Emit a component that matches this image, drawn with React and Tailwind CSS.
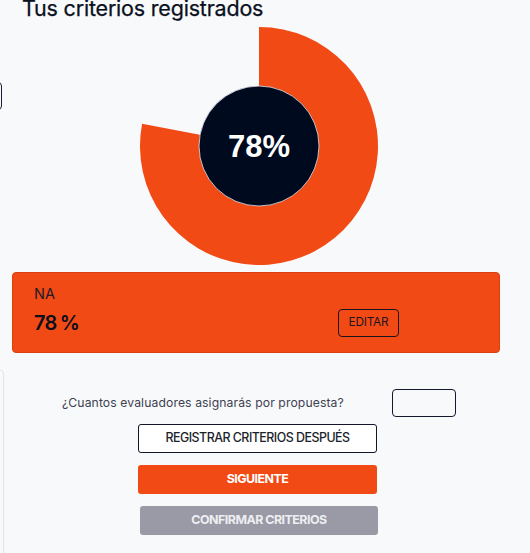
import React from "react";

function Donut() {
  return (
    <svg width="240" height="240" viewBox="0 0 240 240">
      <path d="M120 120 L120 1 A119 119 0 1 1 3.1 97.7 Z" fill="#f24a15" />
      <circle cx="120" cy="120" r="60" fill="#000a1f" stroke="#e8e9ee" strokeWidth="0.8" />
      <text
        x="120"
        y="131"
        textAnchor="middle"
        fill="#ffffff"
        fontFamily="'Liberation Sans', Arial, sans-serif"
        fontWeight="700"
        fontSize="31"
      >
        78%
      </text>
    </svg>
  );
}

export default function App() {
  return (
    <div className="relative w-[530px] h-[553px] overflow-hidden bg-[#f8f9fb] font-['Inter',sans-serif] text-[#0b1020]">
      <div className="absolute left-[-40px] top-[82px] w-[42px] h-[28px] rounded-[4px] border border-[#1a1f33]" />
      <div className="absolute left-[-40px] top-[369px] w-[44px] h-[200px] rounded-[5px] border border-[#e2e4ea]" />

      <h1 className="ml-[22px] mt-[-5px] text-[21.5px] leading-[26px] font-normal tracking-[-0.2px] [-webkit-text-stroke:0.25px_#0b1020]">
        Tus criterios registrados
      </h1>

      <div className="mt-[5px] flex pl-[139px]">
        <Donut />
      </div>

      <div className="mt-[6px] ml-[12px] w-[488px] h-[81px] rounded-[4px] bg-[#f24a15] border border-[#d8400f] pl-[21px] pt-[11px]">
        <div className="text-[14.5px] leading-[20px] text-[#1c1c28]">NA</div>
        <div className="mt-[5px] flex items-center">
          <div className="w-[304px] text-[20px] leading-[28px] font-semibold text-[#0b0f1c] tracking-[-0.8px]">
            78<span className="ml-[-1px]"> %</span>
          </div>
          <button className="w-[61px] h-[28px] rounded-[4px] border border-[#1a1420] text-[11.8px] text-[#1c1620] tracking-[-0.2px]">
            EDITAR
          </button>
        </div>
      </div>

      <div className="mt-[36px] ml-[62px] flex items-center">
        <div className="w-[330px] text-[12.2px] text-[#3d4150] tracking-[0.1px]">
          ¿Cuantos evaluadores asignarás por propuesta?
        </div>
        <input className="w-[64px] h-[28px] rounded-[4px] border border-[#141a2c] bg-transparent" />
      </div>

      <div className="mt-[7px] ml-[138px] flex flex-col gap-[12px]">
        <button className="w-[239px] h-[29px] rounded-[3px] border border-[#121628] bg-white text-[12.4px] font-medium text-[#1c1f2c] tracking-[-0.5px]">
          REGISTRAR CRITERIOS DESPUÉS
        </button>
        <button className="w-[239px] h-[29px] rounded-[3px] bg-[#f24a15] text-[12.4px] font-bold text-white tracking-[-0.5px]">
          SIGUIENTE
        </button>
        <button className="ml-[2px] w-[238px] h-[29px] rounded-[3px] bg-[#999aa5] text-[12.4px] font-bold text-[#eeeef2] tracking-[-0.5px]">
          CONFIRMAR CRITERIOS
        </button>
      </div>
    </div>
  );
}
